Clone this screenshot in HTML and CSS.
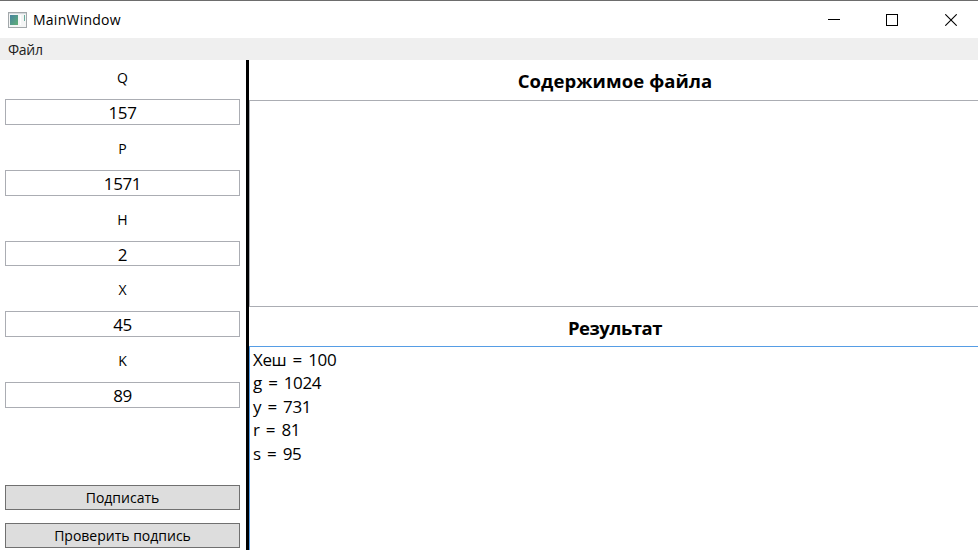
FILE: index.html
```html
<!DOCTYPE html>
<html lang="ru">
<head>
<meta charset="utf-8">
<title>MainWindow</title>
<link rel="stylesheet" href="styles.css">
</head>
<body>
<div class="window">
  <header class="titlebar">
    <svg class="app-icon" width="19" height="16" viewBox="0 0 19 16">
      <defs><linearGradient id="g" x1="0" y1="0" x2="1" y2="1"><stop offset="0" stop-color="#4682a0"/><stop offset="1" stop-color="#5fb074"/></linearGradient></defs>
      <rect x=".5" y=".5" width="18" height="15" fill="#f4f5f5" stroke="#a3a8ab"/>
      <path d="M1 1.5h17" stroke="#d3d8dc"/>
      <rect x="2" y="3" width="8" height="10" fill="url(#g)"/>
      <path d="M16.5 3v6" stroke="#68ad9d"/>
      <path d="M12.5 3v10" stroke="#fff"/>
    </svg>
    <span class="title">MainWindow</span>
    <div class="controls">
      <svg width="12" height="12" viewBox="0 0 12 12"><path d="M0 5.5h12" stroke="#000"/></svg>
      <svg width="12" height="12" viewBox="0 0 12 12"><rect x=".5" y=".5" width="11" height="11" fill="none" stroke="#000"/></svg>
      <svg width="12" height="12" viewBox="0 0 12 12"><path d="M.3.3l11.4 11.4M11.7.3L.3 11.7" stroke="#000" stroke-width="1.1"/></svg>
    </div>
  </header>
  <nav class="menubar"><span>Файл</span></nav>
  <main class="content">
    <section class="params">
      <label>Q</label><div class="field">157</div>
      <label>P</label><div class="field">1571</div>
      <label>H</label><div class="field">2</div>
      <label>X</label><div class="field">45</div>
      <label>K</label><div class="field">89</div>
      <button class="sign">Подписать</button>
      <button class="verify">Проверить подпись</button>
    </section>
    <section class="output">
      <h2 class="file-heading">Содержимое файла</h2>
      <div class="file-text"></div>
      <h2 class="result-heading">Результат</h2>
      <div class="result-text">
        <p>Хеш = 100</p>
        <p>g = 1024</p>
        <p>y = 731</p>
        <p>r = 81</p>
        <p>s = 95</p>
      </div>
    </section>
  </main>
</div>
</body>
</html>
```

FILE: styles.css
```css
* { box-sizing: border-box; }

body {
  margin: 0;
  background: #fff;
  color: #000;
  font-family: "Open Sans", "Noto Sans", sans-serif;
  font-size: 14px;
}

.window {
  display: flex;
  flex-direction: column;
  width: 978px;
  height: 550px;
  overflow: hidden;
  border-top: 1px solid #6d6d6d;
}

.titlebar {
  display: flex;
  align-items: center;
  height: 37px;
  padding-left: 8px;
  flex: none;
}

.title { margin-left: 6px; letter-spacing: 0.25px; }

.controls {
  display: flex;
  gap: 47px;
  margin: 0 21px 0 auto;
}

.controls svg:first-child { margin-right: -1px; }

.menubar {
  flex: none;
  height: 22px;
  padding-left: 8px;
  background: #efefef;
  color: #212121;
  line-height: 23px;
  letter-spacing: -0.3px;
}

.content {
  display: grid;
  grid-template-columns: 249px 1fr;
  flex: 1;
  min-height: 0;
}

.params {
  display: grid;
  grid-template-rows: 39px 26px 45px 26px 45px 25px 45px 26px 45px 26px 25px 25px;
  align-content: start;
  padding: 0 6px 0 5px;
  border-right: 3px solid #000;
  border-image: linear-gradient(to right, #777 33%, #000 33%) 3;
  text-align: center;
}

label { line-height: 35px; font-size: 14px; }
label:not(:first-child) { line-height: 47px; }

.field {
  border: 1px solid #abadb3;
  font-size: 17px;
  line-height: 25px;
  letter-spacing: -0.4px;
}

button {
  height: 25px;
  padding: 0;
  border: 1px solid #707070;
  background: #ddd;
  color: #000;
  font: 14px/23px "Open Sans", "Noto Sans", sans-serif;
}

.sign { margin-top: 77px; }
.verify { margin-top: 90px; }

.output {
  display: grid;
  grid-template-rows: 40px 207px 39px 1fr;
}

h2 {
  margin: 0;
  padding-left: 3px;
  font-size: 18.5px;
  font-weight: 700;
  line-height: 41px;
  text-align: center;
}

.file-heading { letter-spacing: 0.1px; }
.result-heading { letter-spacing: -0.45px; }

.file-text {
  border: 1px solid #abadb3;
  border-right: 0;
}

.result-text {
  padding: 1px 3px;
  border: 1px solid #569de5;
  border-width: 1px 0 0 1px;
}

.result-text p {
  margin: 0;
  font-size: 17px;
  line-height: 23.4px;
  letter-spacing: -0.4px;
  word-spacing: 2.3px;
}
```
